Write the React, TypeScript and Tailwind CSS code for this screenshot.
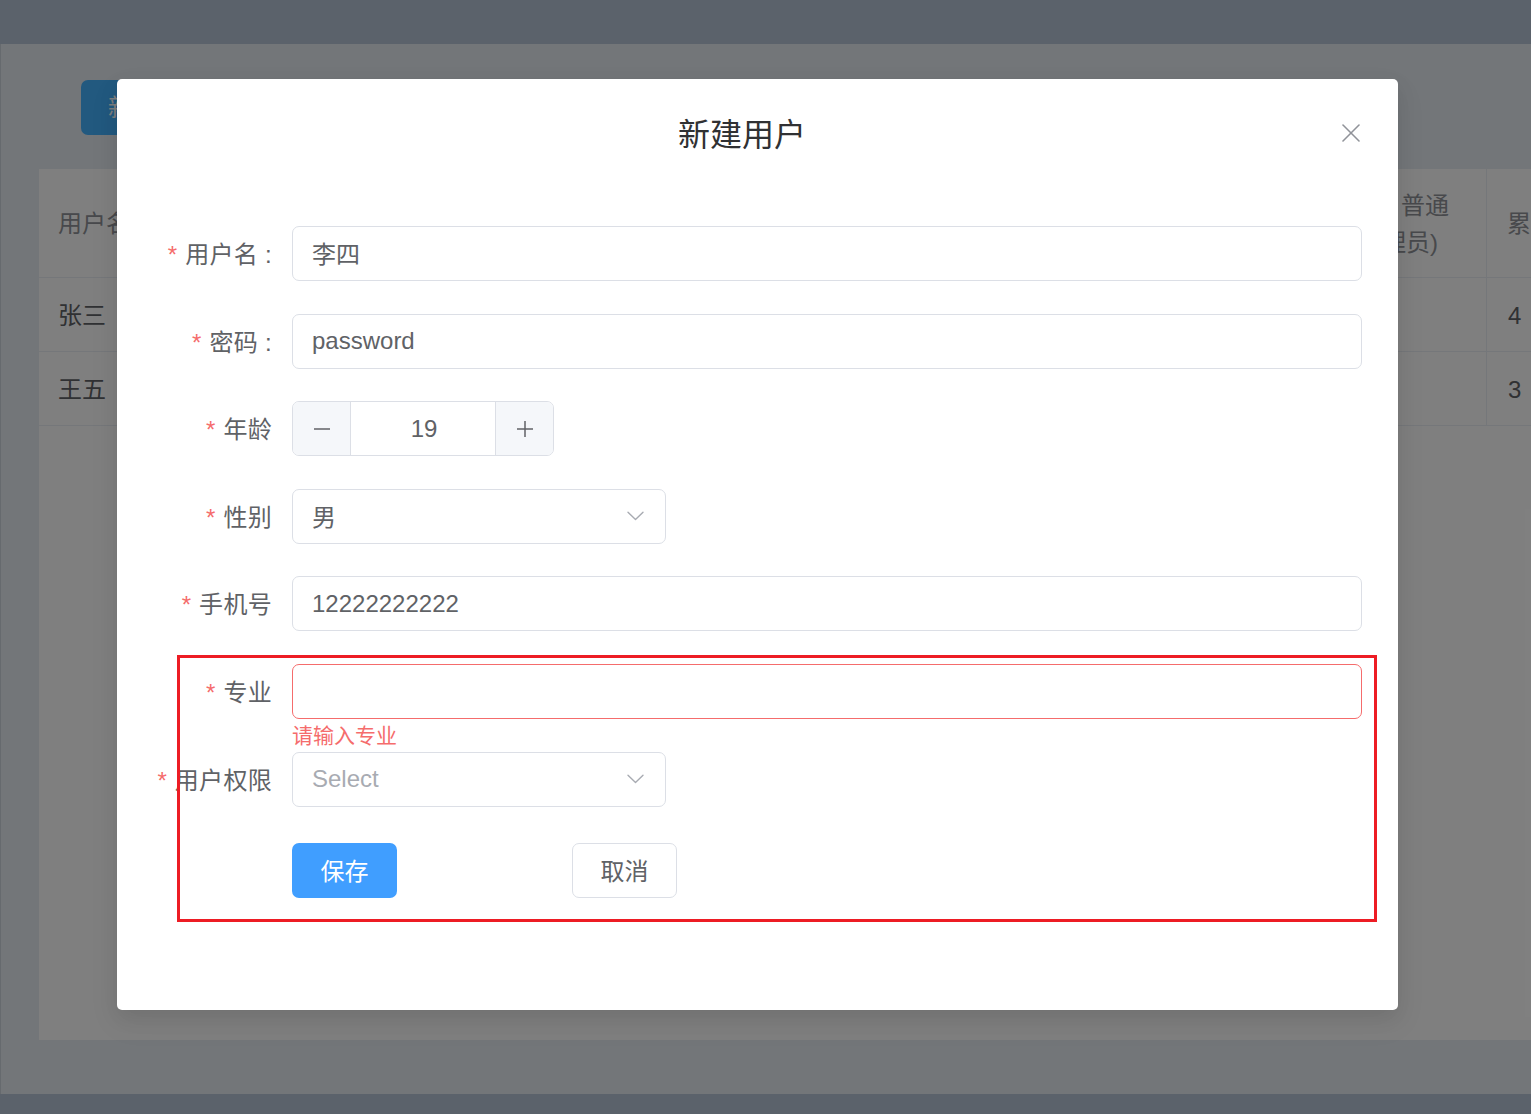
import React from "react";

const F = "font-['Liberation_Sans','Noto_Sans_CJK_SC',sans-serif]";

function Chevron() {
  return (
    <svg width="17" height="10" viewBox="0 0 17 10" fill="none">
      <polyline points="1,1.2 8.5,8.5 16,1.2" stroke="#a8abb2" strokeWidth="1.4" strokeLinecap="round" strokeLinejoin="round" />
    </svg>
  );
}

function Label({ text }: { text: string }) {
  return (
    <div className="w-[140px] shrink-0 flex justify-end items-center pt-[3px] pr-[20px] whitespace-nowrap text-[24px] text-[#606266]">
      <span className="text-[#f56c6c] mr-[8px]">*</span>
      <span className="tracking-[0.3px]">{text}</span>
    </div>
  );
}

function TextBox({ value, error, cjk }: { value: string; error?: boolean; cjk?: boolean }) {
  return (
    <div
      className={
        "flex-1 h-[55px] rounded-[7px] border px-[19px] flex items-center text-[24px] text-[#606266] bg-white " +
        (error ? "border-[#f56c6c]" : "border-[#dcdfe6]") +
        (cjk ? " pt-[3px]" : "")
      }
    >
      {value}
    </div>
  );
}

function SelectBox({ value, placeholder }: { value?: string; placeholder?: string }) {
  return (
    <div className="w-[374px] h-[55px] rounded-[7px] border border-[#dcdfe6] pl-[19px] pr-[21px] flex items-center justify-between text-[24px] bg-white">
      {value ? (
        <span className="text-[#606266] pt-[3px]">{value}</span>
      ) : (
        <span className="text-[#a8abb2]">{placeholder}</span>
      )}
      <Chevron />
    </div>
  );
}

export default function App() {
  return (
    <div className={"relative w-[1531px] h-[1114px] overflow-hidden bg-[#e6ecf2] " + F}>
      {/* underlying page */}
      <div className="h-[44px] bg-[#b6c4d6]" />
      <div className="h-[1050px] border-l border-[#cdd4dc] pl-[38px] pt-[36px]">
        <div className="ml-[42px] w-[150px] h-[55px] rounded-[7px] bg-[#44b2ff] text-white text-[24px] flex items-center pl-[27px]">
          新增用户
        </div>
        <div className="mt-[34px] w-[1600px] h-[871px] bg-white text-[24px]">
          {/* header */}
          <div className="flex h-[109px] border-b border-[#ebeef5] text-[#909399]">
            <div className="w-[240px] px-[19px] flex items-center pt-[2px]">用户名</div>
            <div className="w-[822px] px-[19px] flex items-center">密码</div>
            <div className="w-[385px] flex flex-col justify-center leading-[37px] pt-[1px]">
              <div className="text-right pr-[37px]">权限(1超级管理员，普通</div>
              <div className="text-right pr-[48px]">管理员)</div>
            </div>
            <div className="flex-1 border-l border-[#ebeef5] pl-[20px] flex items-center pt-[2px]">累计登录</div>
          </div>
          {[
            ["张三", "4"],
            ["王五", "3"],
          ].map(([n, c]) => (
            <div key={n} className="flex h-[74px] border-b border-[#ebeef5] text-[#606266]">
              <div className="w-[240px] px-[19px] flex items-center pt-[3px]">{n}</div>
              <div className="w-[822px]" />
              <div className="w-[385px]" />
              <div className="flex-1 border-l border-[#ebeef5] pl-[21px] flex items-center pt-[2px]">{c}</div>
            </div>
          ))}
        </div>
      </div>
      <div className="h-[20px] bg-[#b6c4d6]" />

      {/* modal overlay */}
      <div className="absolute inset-0 bg-black/50" />

      {/* dialog */}
      <div className="absolute left-[117px] top-[79px] w-[1281px] h-[931px] bg-white rounded-[5px] shadow-[0_12px_32px_4px_rgba(0,0,0,0.04),0_8px_20px_rgba(0,0,0,0.08)]">
        <div className="pt-[36px] pr-[31px] h-[75px] text-center text-[32px] leading-[41px] text-[#303133]">新建用户</div>
        <div className="absolute right-[38px] top-[45px] w-[18px] h-[18px]">
          <svg width="18" height="18" viewBox="0 0 18 18" fill="none">
            <line x1="1" y1="1" x2="17" y2="17" stroke="#909399" strokeWidth="1.6" strokeLinecap="round" />
            <line x1="17" y1="1" x2="1" y2="17" stroke="#909399" strokeWidth="1.6" strokeLinecap="round" />
          </svg>
        </div>

        <div className="pt-[72px] pl-[35px] pr-[36px]">
          <div className="flex items-center h-[55px] mb-[32.5px]">
            <Label text="用户名 :" />
            <TextBox value="李四" cjk />
          </div>
          <div className="flex items-center h-[55px] mb-[32.5px]">
            <Label text="密码 :" />
            <TextBox value="password" />
          </div>
          <div className="flex items-center h-[55px] mb-[32.5px]">
            <Label text="年龄" />
            <div className="w-[262px] h-[55px] rounded-[7px] border border-[#dcdfe6] flex overflow-hidden">
              <div className="w-[58px] bg-[#f5f7fa] border-r border-[#dcdfe6] flex items-center justify-center">
                <svg width="18" height="18" viewBox="0 0 18 18">
                  <line x1="1" y1="9" x2="17" y2="9" stroke="#606266" strokeWidth="1.5" />
                </svg>
              </div>
              <div className="flex-1 flex items-center justify-center text-[24px] text-[#606266] pl-[2px]">19</div>
              <div className="w-[58px] bg-[#f5f7fa] border-l border-[#dcdfe6] flex items-center justify-center">
                <svg width="18" height="18" viewBox="0 0 18 18">
                  <line x1="1" y1="9" x2="17" y2="9" stroke="#606266" strokeWidth="1.5" />
                  <line x1="9" y1="1" x2="9" y2="17" stroke="#606266" strokeWidth="1.5" />
                </svg>
              </div>
            </div>
          </div>
          <div className="flex items-center h-[55px] mb-[32.5px]">
            <Label text="性别" />
            <SelectBox value="男" />
          </div>
          <div className="flex items-center h-[55px] mb-[32.5px]">
            <Label text="手机号" />
            <TextBox value="12222222222" />
          </div>
          <div className="flex items-center h-[55px]">
            <Label text="专业" />
            <TextBox value="" error />
          </div>
          <div className="h-[33px] pl-[140px] text-[21px] leading-[33px] text-[#f56c6c]">请输入专业</div>
          <div className="flex items-center h-[55px] mb-[36px]">
            <Label text="用户权限" />
            <SelectBox placeholder="Select" />
          </div>
          <div className="flex items-center h-[55px] pl-[140px]">
            <div className="w-[105px] h-[55px] rounded-[7px] bg-[#409eff] text-white text-[24px] flex items-center justify-center pt-[3px]">
              保存
            </div>
            <div className="ml-[175px] w-[105px] h-[55px] rounded-[7px] border border-[#dcdfe6] bg-white text-[#606266] text-[24px] flex items-center justify-center pt-[3px]">
              取消
            </div>
          </div>
        </div>
      </div>

      {/* annotation box */}
      <div className="absolute left-[177px] top-[655px] w-[1200px] h-[267px] border-[3px] border-[#ed1c24]" />
    </div>
  );
}
